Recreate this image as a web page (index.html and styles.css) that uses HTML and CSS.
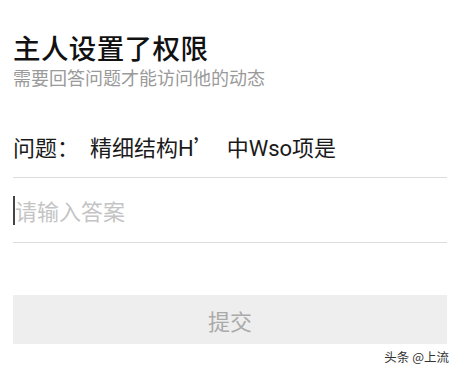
FILE: index.html
```html
<!DOCTYPE html>
<html lang="zh">
<head>
<meta charset="utf-8">
<link rel="stylesheet" href="styles.css">
</head>
<body>
<div class="page">
  <h1 class="title">主人设置了权限</h1>
  <p class="subtitle">需要回答问题才能访问他的动态</p>
  <div class="question">问题：&nbsp;&nbsp;精细结构H<span class="cjk">’</span>中Wso项是</div>
  <div class="answer">
    <span class="cursor"></span><span class="placeholder">请输入答案</span>
  </div>
  <button class="submit">提交</button>
  <div class="watermark">头条 @上流</div>
</div>
</body>
</html>
```

FILE: styles.css
```css
html, body {
  margin: 0;
  padding: 0;
  background: #fff;
}
body {
  font-family: "Noto Sans CJK SC", "Noto Sans", sans-serif;
  width: 460px;
  height: 370px;
  overflow: hidden;
}
.page {
  padding: 0 13px;
  display: flex;
  flex-direction: column;
}
.title {
  margin: 30px 0 0;
  font-size: 27.5px;
  font-weight: 500;
  line-height: 34px;
  color: #111;
  letter-spacing: 0.4px;
}
.subtitle {
  margin: 1px 0 0;
  font-size: 18px;
  line-height: 24px;
  color: #9a9a9a;
}
.question {
  margin-top: 42px;
  font-family: Roboto, "Noto Sans CJK SC", sans-serif;
  font-size: 22px;
  line-height: 30px;
  color: #1a1a1a;
  padding-bottom: 13px;
  border-bottom: 1px solid #dcdcdc;
}
.cjk {
  font-family: "Noto Sans CJK SC", sans-serif;
  margin-right: 11px;
}
.answer {
  height: 64px;
  display: flex;
  align-items: center;
  border-bottom: 1px solid #dcdcdc;
}
.cursor {
  width: 2px;
  height: 29px;
  background: #444;
}
.placeholder {
  font-size: 22px;
  color: #c4c4c4;
}
.submit {
  margin-top: 52px;
  height: 49px;
  border: none;
  background: #eeeeee;
  color: #aaaaaa;
  font-family: inherit;
  font-size: 22px;
  padding: 0;
}
.watermark {
  align-self: flex-end;
  margin-top: 3px;
  font-size: 12.5px;
  color: #333;
  margin-right: -2px;
}
```
